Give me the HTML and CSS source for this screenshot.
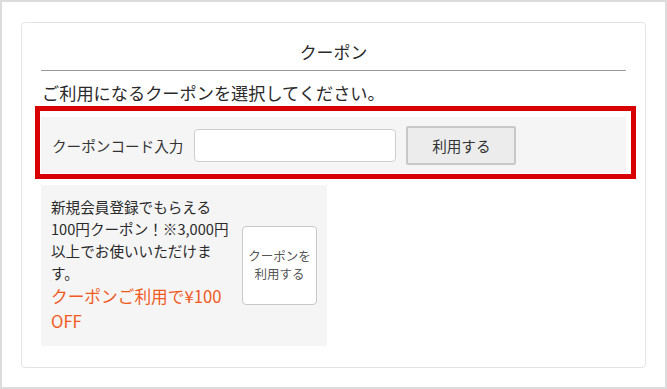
FILE: index.html
```html
<!DOCTYPE html>
<html lang="ja">
<head>
  <meta charset="UTF-8">
  <title>クーポン</title>
  <link rel="stylesheet" href="styles.css">
</head>
<body>
<div class="frame">
  <div class="card">
    <h2 class="title">クーポン</h2>
    <p class="lead">ご利用になるクーポンを選択してください。</p>

    <div class="code-wrap">
      <div class="code-row">
        <label class="code-label" for="code">クーポンコード入力</label>
        <input class="code-input" id="code" type="text">
        <button class="code-btn">利用する</button>
      </div>
      <div class="highlight"></div>
    </div>

    <div class="coupon">
      <div class="coupon-text">
        <p class="coupon-desc">新規会員登録でもらえる100円クーポン！※3,000円以上でお使いいただけます。</p>
        <p class="coupon-off">クーポンご利用で¥100 OFF</p>
      </div>
      <button class="coupon-btn">クーポンを<br>利用する</button>
    </div>
  </div>
</div>
</body>
</html>
```

FILE: styles.css
```css
html, body { margin: 0; padding: 0; }
body { font-family: "Noto Sans CJK JP", "Noto Sans", sans-serif; color: #333; background: #fff; }

.frame {
  box-sizing: border-box;
  width: 667px;
  height: 389px;
  border: 2px solid #dcdcdc;
  padding: 20px 19px 19px 19px;
}

.card {
  box-sizing: border-box;
  height: 346px;
  border: 1px solid #e4e4e4;
  border-radius: 4px;
  padding: 0 19px 0 19px;
}

.title {
  margin: 0;
  padding: 16px 0 6px;
  font-size: 16.9px;
  font-weight: normal;
  line-height: 25px;
  text-align: center;
  color: #2a2a2a;
  border-bottom: 1px solid #999;
}

.lead {
  margin: 10px 0 0 1px;
  font-size: 17.2px;
  line-height: 24px;
  color: #2a2a2a;
}

.code-wrap { position: relative; margin-top: 12px; }

.code-row {
  display: flex;
  align-items: center;
  height: 56px;
  padding: 0 11px;
  background: #f5f5f5;
}
.code-label { font-size: 14.6px; color: #333; margin-right: 11px; }
.code-input {
  box-sizing: border-box;
  width: 202px;
  height: 33px;
  margin: 0 10px 0 0;
  border: 1px solid #cfcfcf;
  border-radius: 4px;
  background: #fff;
}
.code-btn {
  box-sizing: border-box;
  width: 110px;
  height: 39px;
  border: 2px solid #c8c8c8;
  border-radius: 2px;
  background: #ececec;
  font-family: inherit;
  font-size: 14.6px;
  color: #333;
}

.highlight {
  position: absolute;
  left: -6px;
  top: -11px;
  width: 601px;
  height: 73px;
  box-sizing: border-box;
  border: 5px solid #d90000;
}

.coupon {
  display: flex;
  align-items: center;
  width: 286px;
  box-sizing: border-box;
  margin-top: 12px;
  padding: 11px 10px 12px 10px;
  background: #f5f5f5;
}
.coupon-text { width: 178px; margin-right: 13px; }
.coupon-desc { margin: 0; font-size: 14.6px; line-height: 22px; color: #2a2a2a; }
.coupon-off { margin: 0; font-size: 16.7px; line-height: 25px; color: #f05a1e; }
.coupon-btn {
  box-sizing: border-box;
  width: 75px;
  height: 79px;
  padding: 0;
  border: 1px solid #c8c8c8;
  border-radius: 4px;
  background: #fff;
  font-family: inherit;
  font-size: 12.5px;
  line-height: 18px;
  color: #555;
}
```
